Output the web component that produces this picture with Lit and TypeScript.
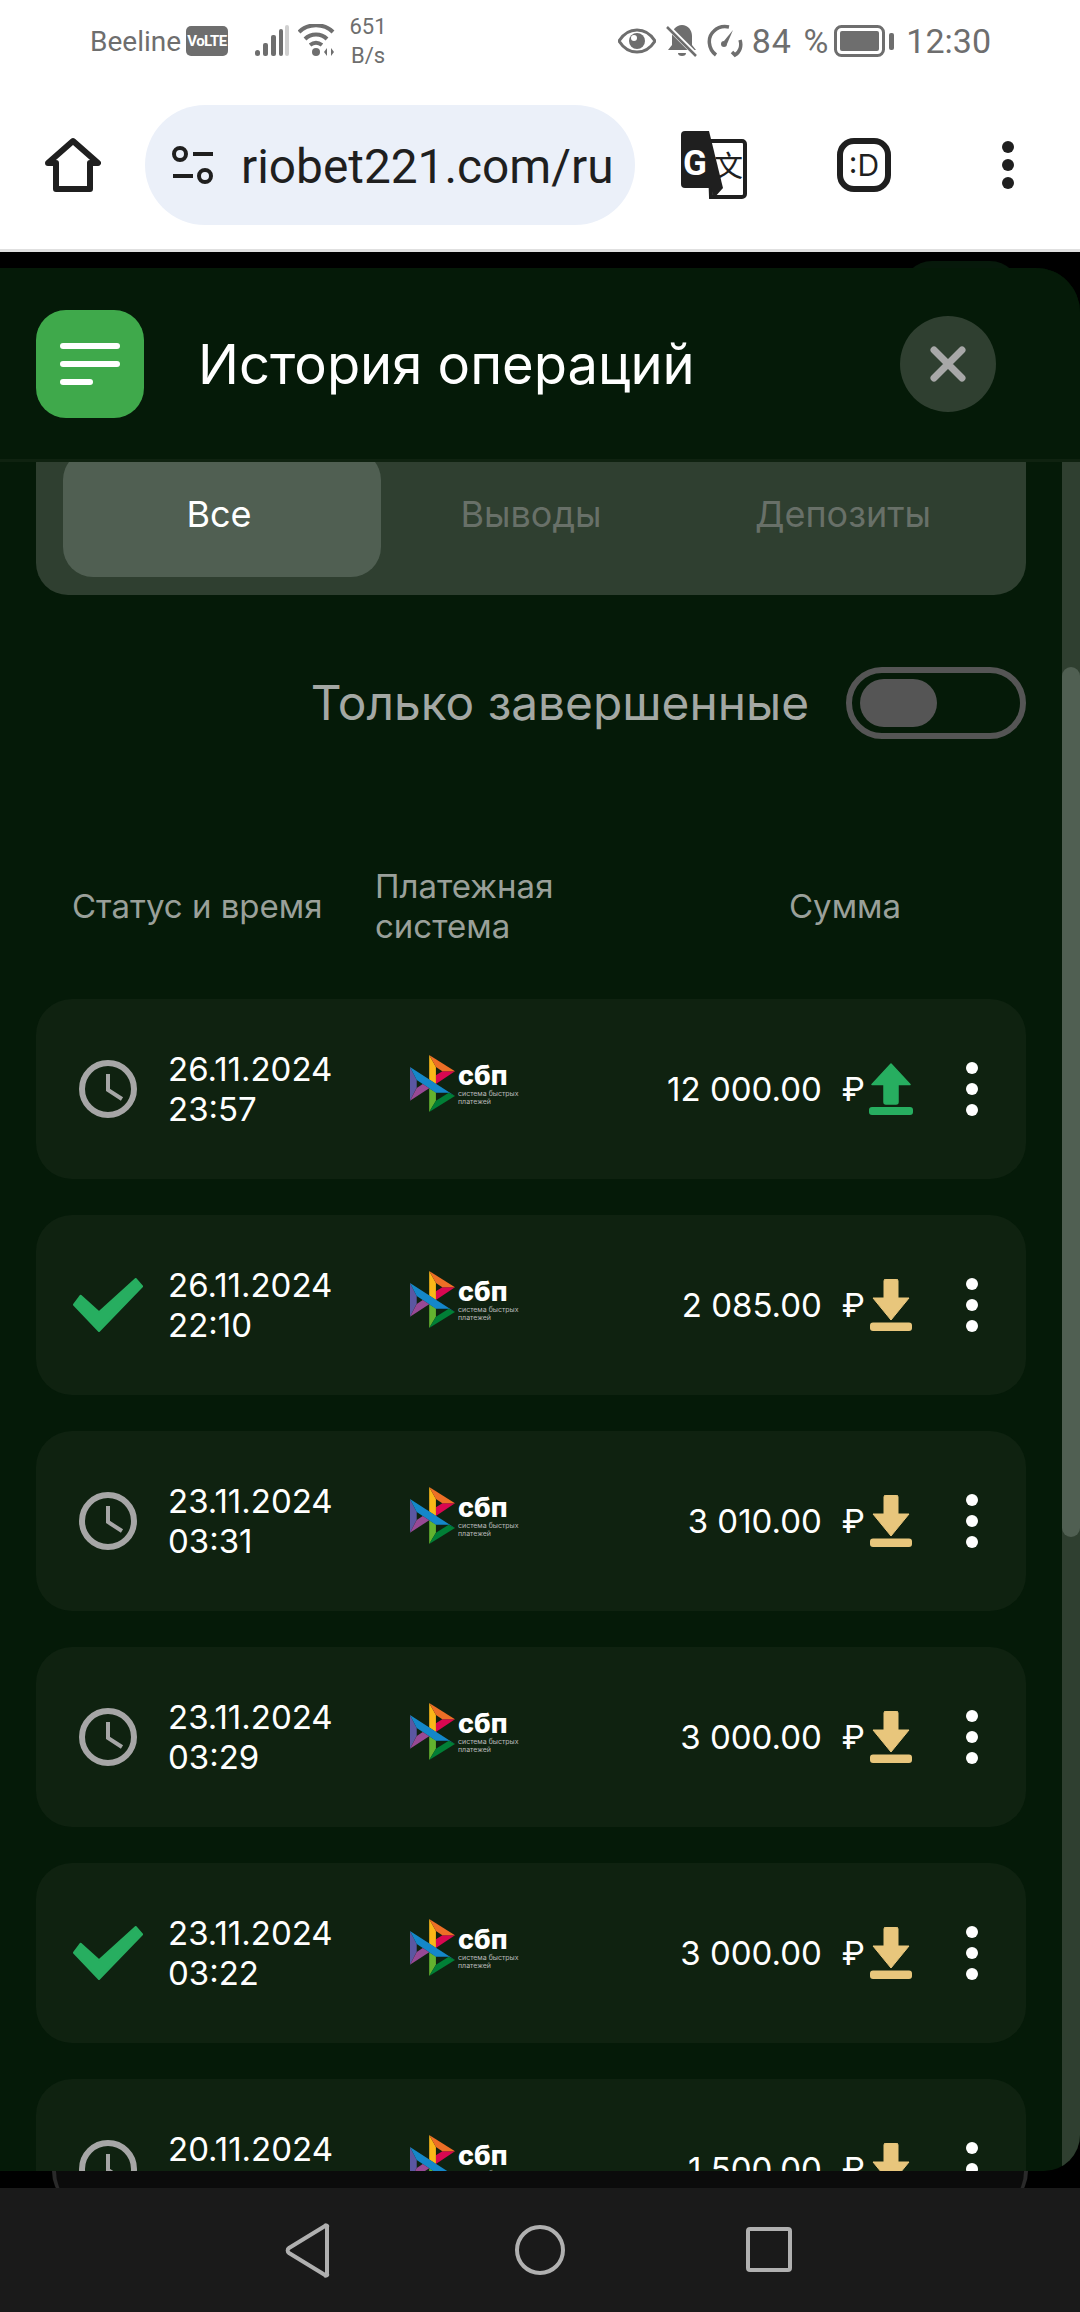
import { LitElement, html, css, svg } from "lit";
import { customElement } from "lit/decorators.js";

const rows = [
  { done: false, date: "26.11.2024", time: "23:57", sum: "12 000.00", up: true },
  { done: true, date: "26.11.2024", time: "22:10", sum: "2 085.00", up: false },
  { done: false, date: "23.11.2024", time: "03:31", sum: "3 010.00", up: false },
  { done: false, date: "23.11.2024", time: "03:29", sum: "3 000.00", up: false },
  { done: true, date: "23.11.2024", time: "03:22", sum: "3 000.00", up: false },
  { done: false, date: "20.11.2024", time: "03:01", sum: "1 500.00", up: false },
];

const clock = svg`<svg class="st-clock" viewBox="0 0 58 58"><circle cx="29" cy="29" r="26" fill="none" stroke="#a6a6a6" stroke-width="6"/><path d="M29 14v16l14 9" fill="none" stroke="#a6a6a6" stroke-width="4"/></svg>`;
const check = svg`<svg class="st-check" viewBox="0 0 70 54"><path d="M7.7 17.7L26 34.3 62.7 1l6.5 7.3L26 53 1 26.7z" fill="#27ae60" stroke="#27ae60" stroke-width="2" stroke-linejoin="round"/></svg>`;
const up = svg`<svg class="dir" viewBox="0 0 44 52"><path d="M22 1L41 21.5H29V39a2 2 0 0 1-2 2H17a2 2 0 0 1-2-2V21.5H3z" fill="#27ae60" stroke="#27ae60" stroke-width="1.5" stroke-linejoin="round"/><rect x="0" y="44" width="44" height="8" rx="3" fill="#27ae60"/></svg>`;
const down = svg`<svg class="dir" viewBox="0 0 44 52"><path d="M15 2a2 2 0 0 1 2-2h10a2 2 0 0 1 2 2V19H40L22 41 4 19H15z" fill="#e8c67c" stroke="#e8c67c" stroke-width="1" stroke-linejoin="round"/><rect x="1" y="43.5" width="42" height="8.5" rx="3" fill="#e8c67c"/></svg>`;
const sbpMark = svg`<svg class="sbp-mark" viewBox="0 0 42.2 50" preserveAspectRatio="none">
  <path d="M0 10.6l6.3 11.3v6.9L0 40.1z" fill="#5b57a2"/>
  <path d="M24.3 17.8l6-3.6h11.9L24.3 25.4z" fill="#d90751"/>
  <path d="M24.3 10.5v14.9L18 21.5V0z" fill="#fab718"/>
  <path d="M42.2 14.2H30.3l-6-3.7L18 0z" fill="#ed6f26"/>
  <path d="M24.3 40.2V33L18 29.2V50z" fill="#63b22f"/>
  <path d="M0 10.6L42.2 36l-5.9-2.9H24.3L6.3 21.9z" fill="#1487c9"/>
  <path d="M18 50l6.3-9.8 12-7.1 5.9 2.9z" fill="#017f36"/>
  <path d="M0 40.1l18-10.9-6-3.7-5.7 3.4z" fill="#984995"/>
</svg>`;

@customElement("app-root")
export class AppRoot extends LitElement {
  static styles = css`
    :host {
      display: block;
      width: 1080px;
      height: 2312px;
      overflow: hidden;
      font-family: Inter, "Noto Sans", sans-serif;
    }
    .page {
      display: flex;
      flex-direction: column;
      height: 2312px;
      background: #000;
    }

    /* status bar */
    .status {
      height: 80px;
      flex: none;
      background: #fff;
      color: #6e6e6e;
      display: flex;
      align-items: center;
      justify-content: space-between;
      padding: 2px 89px 0 90px;
      box-sizing: border-box;
      font-family: Roboto, sans-serif;
    }
    .status-side {
      display: flex;
      align-items: center;
    }
    .carrier {
      font-size: 28px;
      width: 96px;
    }
    .volte {
      width: 42px;
      height: 30px;
      border-radius: 5px;
      background: #6e6e6e;
      color: #fff;
      font-size: 15px;
      font-weight: 700;
      letter-spacing: -0.5px;
      display: flex;
      align-items: center;
      justify-content: center;
      margin-right: 27px;
    }
    .signal {
      margin-right: 9px;
    }
    .bell {
      margin-left: 10px;
    }
    .gauge {
      margin-left: 9px;
    }
    .speed {
      font-size: 22px;
      line-height: 29px;
      text-align: center;
      margin-left: 13px;
      width: 38px;
    }
    .pct,
    .clock-text {
      font-size: 34px;
    }
    .pct {
      margin: 0 5px 0 9px;
      letter-spacing: 1px;
      word-spacing: 2px;
    }
    .clock-text {
      margin-left: 12px;
    }

    /* browser toolbar */
    .toolbar {
      height: 172px;
      box-sizing: border-box;
      flex: none;
      background: #fff;
      border-bottom: 3px solid #e0e0e0;
      display: flex;
      align-items: center;
      position: relative;
    }
    .home {
      width: 56px;
      height: 56px;
      margin: 0 44px 0 45px;
    }
    .url {
      width: 490px;
      height: 120px;
      border-radius: 60px;
      background: #ebf0f9;
      display: flex;
      align-items: center;
      box-sizing: border-box;
      padding: 4px 0 0 26px;
      color: #1f1f1f;
      font-family: Roboto, sans-serif;
      font-size: 47.8px;
      white-space: nowrap;
    }
    .url svg {
      width: 44px;
      height: 38px;
      margin: -4px 26px 0 0;
      flex: none;
    }
    .translate {
      width: 66px;
      height: 68px;
      margin-left: 46px;
    }
    .smile {
      width: 54px;
      height: 54px;
      margin-left: 90px;
      box-sizing: border-box;
      border: 6px solid #1f1f1f;
      border-radius: 17px;
      font-size: 30px;
      color: #1f1f1f;
      display: flex;
      align-items: center;
      justify-content: center;
    }
    .more {
      width: 12px;
      margin-left: 111px;
      display: flex;
      flex-direction: column;
      gap: 6px;
    }
    .more i {
      width: 12px;
      height: 12px;
      border-radius: 50%;
      background: #1f1f1f;
    }

    /* dark area */
    .stage {
      flex: 1;
      position: relative;
      padding-top: 16px;
      display: flex;
      flex-direction: column;
      background: #000;
      min-height: 0;
    }
    .peek {
      position: absolute;
      left: 902px;
      top: 9px;
      width: 118px;
      height: 40px;
      border-radius: 30px 30px 0 0;
      background: #07190b;
    }
    .modal {
      position: relative;
      height: 1903px;
      flex: none;
      background: #051a08;
      border-radius: 0 44px 36px 0;
      overflow: hidden;
      display: flex;
      flex-direction: column;
    }
    .behind {
      height: 17px;
      flex: none;
      margin: 0 52px;
      overflow: hidden;
    }
    .behind i {
      display: block;
      height: 40px;
      box-sizing: border-box;
      border: solid #2a2a2a;
      border-width: 0 4px;
      border-radius: 0 0 40px 40px;
      background: #0b0b0b;
    }
    .head {
      height: 194px;
      flex: none;
      box-sizing: border-box;
      border-bottom: 3px solid #0f2210;
      display: flex;
      align-items: center;
      padding: 0 84px 0 36px;
      background: #051a08;
      position: relative;
      z-index: 1;
    }
    .burger {
      width: 108px;
      height: 108px;
      border-radius: 30px;
      background: #3fa94b;
      display: flex;
      flex-direction: column;
      justify-content: center;
      gap: 12px;
      padding-left: 24px;
      box-sizing: border-box;
    }
    .burger i {
      height: 6px;
      width: 60px;
      border-radius: 3px;
      background: #fff;
    }
    .burger i:last-child {
      width: 33px;
    }
    .title {
      flex: 1;
      margin-left: 54px;
      color: #fff;
      font-size: 54.3px;
      line-height: 60px;
    }
    .close {
      width: 96px;
      height: 96px;
      border-radius: 50%;
      background: #2f3f30;
      display: flex;
      align-items: center;
      justify-content: center;
    }
    .close svg {
      width: 36px;
      height: 36px;
    }

    .body {
      flex: 1;
      min-height: 0;
      display: flex;
      overflow: hidden;
    }
    .content {
      flex: 1;
      min-width: 0;
      padding: 0 36px;
      margin-top: -30px;
    }
    .track {
      width: 18px;
      flex: none;
      background: #2f3f30;
      padding-top: 205px;
    }
    .thumb {
      height: 870px;
      background: #505f52;
      border-radius: 9px;
    }

    .tabs {
      display: grid;
      grid-template-columns: repeat(3, 312px);
      height: 163px;
      box-sizing: border-box;
      padding: 18px 27px;
      border-radius: 32px;
      background: #2f3f30;
    }
    .tab {
      display: flex;
      align-items: center;
      justify-content: center;
      font-size: 36px;
      color: #687068;
      border-radius: 30px;
    }
    .tab.on {
      color: #fff;
      background: #505f52;
      margin-right: -6px;
      padding-right: 6px;
    }

    .only {
      display: flex;
      align-items: center;
      justify-content: flex-end;
      margin-top: 72px;
      gap: 37px;
      color: #a4a8a4;
      font-size: 47.8px;
    }
    .switch {
      width: 180px;
      height: 72px;
      flex: none;
      box-sizing: border-box;
      border: 6px solid #555;
      border-radius: 36px;
      padding: 6px 8px;
    }
    .switch i {
      display: block;
      width: 77px;
      height: 48px;
      border-radius: 24px;
      background: #555;
    }

    .cols {
      display: flex;
      align-items: center;
      margin-top: 128px;
      height: 80px;
      box-sizing: border-box;
      padding: 0 0 3px 36px;
      color: #9aa09a;
      font-size: 33px;
      line-height: 40px;
    }
    .cols .c1 {
      width: 303px;
    }
    .cols .c2 {
      width: 414px;
    }

    .list {
      margin-top: 52px;
      display: flex;
      flex-direction: column;
      gap: 36px;
    }
    .row {
      height: 180px;
      flex: none;
      border-radius: 36px;
      background: #0f2210;
      display: flex;
      align-items: center;
      padding-left: 27px;
      color: #fff;
      font-size: 33px;
      line-height: 40px;
    }
    .st {
      width: 90px;
      display: flex;
      justify-content: center;
    }
    .st-clock {
      width: 58px;
      height: 58px;
    }
    .st-check {
      width: 70px;
      height: 54px;
    }
    .when {
      width: 242px;
      margin-left: 15px;
    }
    .sbp {
      width: 105px;
      height: 57px;
      display: flex;
      flex: none;
      margin-bottom: 12px;
    }
    .sbp-mark {
      width: 45px;
      height: 57px;
      flex: none;
    }
    .sbp-text {
      margin: 9px 0 0 3px;
      font-weight: 800;
      font-size: 27px;
      line-height: 24px;
    }
    .sbp-text small {
      display: block;
      margin-top: 2px;
      font-weight: 400;
      font-size: 7px;
      line-height: 8px;
      color: #b9b9b9;
      white-space: nowrap;
    }
    .sum {
      flex: 1;
      display: flex;
      justify-content: flex-end;
      gap: 20px;
      white-space: nowrap;
    }
    .dir {
      width: 44px;
      height: 52px;
      margin-left: 4px;
      flex: none;
    }
    .dots {
      width: 12px;
      margin: 0 48px 0 53px;
      display: flex;
      flex-direction: column;
      gap: 9px;
      flex: none;
    }
    .dots i {
      width: 12px;
      height: 12px;
      border-radius: 50%;
      background: #fff;
    }

    /* android nav */
    .nav {
      height: 124px;
      flex: none;
      background: #1a1a1a;
      display: flex;
      justify-content: center;
    }
    .nav svg {
      width: 1080px;
      height: 124px;
    }
  `;

  renderRow(r: (typeof rows)[number]) {
    return html`<div class="row">
      <div class="st">${r.done ? check : clock}</div>
      <div class="when">${r.date}<br />${r.time}</div>
      <div class="sbp">
        ${sbpMark}
        <div class="sbp-text">сбп<small>система быстрых<br />платежей</small></div>
      </div>
      <div class="sum"><span>${r.sum}</span><span>₽</span></div>
      ${r.up ? up : down}
      <div class="dots"><i></i><i></i><i></i></div>
    </div>`;
  }

  render() {
    return html`<div class="page">
      <div class="status">
        <div class="status-side">
          <span class="carrier">Beeline</span>
          <span class="volte">VoLTE</span>
          <svg class="signal" width="34" height="32" viewBox="0 0 34 32">
            <rect x="0" y="25" width="5" height="6" rx="2.5" fill="#6e6e6e" />
            <rect x="8" y="18" width="5" height="13" rx="2" fill="#6e6e6e" />
            <rect x="16" y="10" width="5" height="21" rx="2" fill="#6e6e6e" />
            <rect x="24" y="4" width="4" height="27" rx="2" fill="#6e6e6e" />
            <rect x="30" y="0" width="4" height="31" rx="2" fill="#d0d0d0" />
          </svg>
          <svg width="38" height="34" viewBox="0 0 38 34">
            <path d="M1 8C10 -1 26 -1 35 8M7 15c6-6 16-6 22 0M12 21c4-3 8-3 12 0" fill="none" stroke="#6e6e6e" stroke-width="4" />
            <circle cx="18" cy="28" r="4" fill="#6e6e6e" />
            <path d="M29 24l-3 4 3 4zM33 24l3 4-3 4z" fill="#6e6e6e" />
          </svg>
          <div class="speed">651<br />B/s</div>
        </div>
        <div class="status-side">
          <svg width="38" height="26" viewBox="0 0 38 26">
            <path d="M1 13C6 5 12 2 19 2s13 3 18 11c-5 8-11 11-18 11S6 21 1 13z" fill="none" stroke="#6e6e6e" stroke-width="3" />
            <circle cx="19" cy="13" r="8" fill="#6e6e6e" />
            <circle cx="16" cy="10" r="3" fill="#fff" />
          </svg>
          <svg class="bell" width="32" height="34" viewBox="0 0 32 34">
            <path d="M16 1c6 0 10 5 10 11v9l4 5H2l4-5v-9C6 6 10 1 16 1z" fill="#6e6e6e" />
            <path d="M12 29a4 3 0 0 0 8 0z" fill="#6e6e6e" />
            <path d="M2 3l29 29" stroke="#fff" stroke-width="5" />
            <path d="M1 3l29 29" stroke="#6e6e6e" stroke-width="2.5" />
          </svg>
          <svg class="gauge" width="36" height="34" viewBox="0 0 36 34">
            <path d="M9 31C1 25 0 13 7 7c4-4 10-5 15-4" fill="none" stroke="#6e6e6e" stroke-width="3.5" />
            <path d="M33 16c2 6 0 12-5 15l-3-3" fill="none" stroke="#6e6e6e" stroke-width="3.5" />
            <path d="M26 6L17 17l3 3z" fill="#6e6e6e" />
            <circle cx="17" cy="20" r="3" fill="#6e6e6e" />
          </svg>
          <span class="pct">84 %</span>
          <svg width="60" height="32" viewBox="0 0 60 32">
            <rect x="1.5" y="1.5" width="48" height="29" rx="6" fill="none" stroke="#6e6e6e" stroke-width="3" />
            <rect x="6" y="6" width="39" height="20" rx="2" fill="#6e6e6e" />
            <rect x="55" y="8" width="5" height="17" rx="2" fill="#6e6e6e" />
          </svg>
          <span class="clock-text">12:30</span>
        </div>
      </div>

      <div class="toolbar">
        <svg class="home" viewBox="0 0 56 56">
          <path d="M11 52V26H3L28 4l25 22h-8v26z" fill="none" stroke="#1f1f1f" stroke-width="6" stroke-linejoin="round" />
        </svg>
        <div class="url">
          <svg viewBox="0 0 44 38">
            <circle cx="9" cy="8" r="6" fill="none" stroke="#1f1f1f" stroke-width="4" />
            <path d="M22 8h20M2 30h20" stroke="#1f1f1f" stroke-width="4" />
            <circle cx="34" cy="30" r="6" fill="none" stroke="#1f1f1f" stroke-width="4" />
          </svg>
          riobet221.com/ru
        </div>
        <svg class="translate" viewBox="0 0 66 68">
          <path d="M28 10H61a3 3 0 0 1 3 3V63a3 3 0 0 1-3 3H30z" fill="#fff" stroke="#1f1f1f" stroke-width="4" />
          <text x="33" y="46" font-family="'Noto Sans CJK SC', sans-serif" font-size="29" fill="#1f1f1f">文</text>
          <path d="M4 0H28L42 57H4a4 4 0 0 1-4-4V4a4 4 0 0 1 4-4z" fill="#1f1f1f" />
          <path d="M30 57H42L33 67z" fill="#1f1f1f" />
          <text x="2" y="44" font-family="Roboto, sans-serif" font-weight="700" font-size="35" fill="#fff">G</text>
        </svg>
        <div class="smile">:D</div>
        <div class="more"><i></i><i></i><i></i></div>
      </div>

      <div class="stage">
        <div class="peek"></div>
        <div class="modal">
          <div class="head">
            <div class="burger"><i></i><i></i><i></i></div>
            <div class="title">История операций</div>
            <div class="close">
              <svg viewBox="0 0 36 36">
                <path d="M4 4l28 28M32 4L4 32" stroke="#a8a8a8" stroke-width="7" stroke-linecap="round" />
              </svg>
            </div>
          </div>
          <div class="body">
            <div class="content">
              <div class="tabs">
                <div class="tab on">Все</div>
                <div class="tab">Выводы</div>
                <div class="tab">Депозиты</div>
              </div>
              <div class="only">
                <span>Только завершенные</span>
                <div class="switch"><i></i></div>
              </div>
              <div class="cols">
                <div class="c1">Статус и время</div>
                <div class="c2">Платежная<br />система</div>
                <div>Сумма</div>
              </div>
              <div class="list">${rows.map((r) => this.renderRow(r))}</div>
            </div>
            <div class="track"><div class="thumb"></div></div>
          </div>
        </div>
        <div class="behind"><i></i></div>
      </div>

      <div class="nav">
        <svg viewBox="0 0 1080 124">
          <path d="M327 39v47a1 1 0 0 1-2 1L289 65a3 3 0 0 1 0-5l36-22a1 1 0 0 1 2 1z" fill="none" stroke="#b0b0b0" stroke-width="4" stroke-linejoin="round" />
          <circle cx="540" cy="62" r="23" fill="none" stroke="#b0b0b0" stroke-width="4" />
          <rect x="748" y="41" width="42" height="41" rx="2" fill="none" stroke="#b0b0b0" stroke-width="4" />
        </svg>
      </div>
    </div>`;
  }
}
